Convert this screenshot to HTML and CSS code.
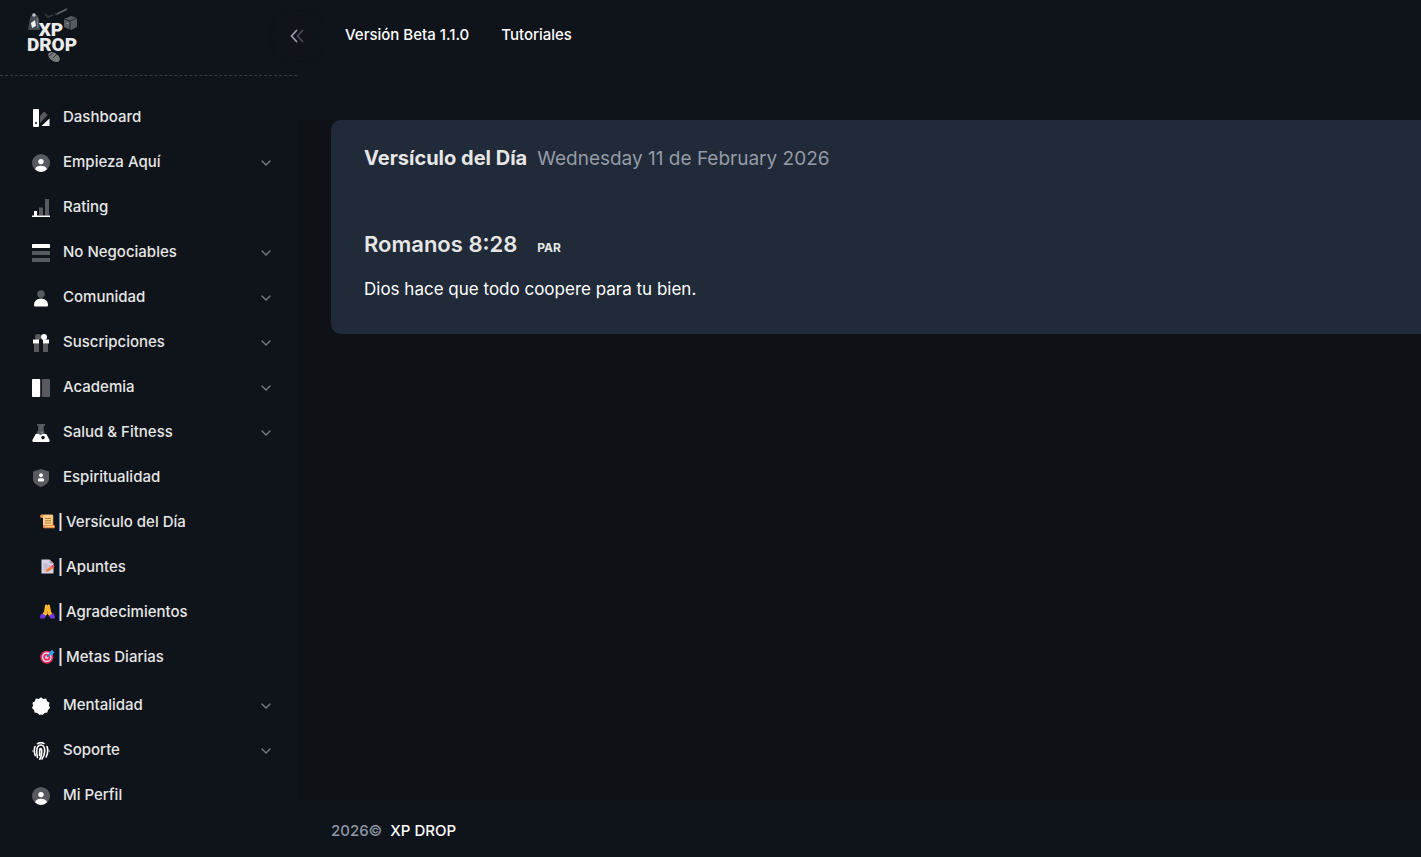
FILE: index.html
```html
<!DOCTYPE html>
<html lang="es">
<head>
<meta charset="utf-8">
<meta name="viewport" content="width=device-width, initial-scale=1">
<title>XP DROP</title>
<link rel="stylesheet" href="styles.css">
</head>
<body>
<svg class="defs" width="0" height="0" aria-hidden="true">
  <symbol id="chevron" viewBox="0 0 10 10"><path d="M1 3l4 4 4-4" fill="none" stroke="currentColor" stroke-width="1.3" stroke-linecap="round" stroke-linejoin="round"/></symbol>
  <symbol id="user" viewBox="0 0 18 18"><circle class="dim" cx="9" cy="9" r="9"/><circle cx="9" cy="7.6" r="2.7"/><path d="M3 15.2C4 12.7 6.2 11.8 9 11.8s5 .9 6 3.4A9 9 0 0 1 9 18a9 9 0 0 1-6-2.8z"/></symbol>
</svg>
<div class="app">
  <aside class="sidebar">
    <div class="brand">
      <a href="#" class="logo" aria-label="XP DROP">
        <svg width="52" height="56" viewBox="0 0 52 56">
          <path d="M18 6l3 3 5-2M28 5l2 2" fill="none" stroke="#343a40" stroke-width="1.6"/>
          <path d="M30 6l10-5" stroke="#626870" stroke-width="1.5"/>
          <path d="M3 10l2-3h5l2 3 1 12H1z" fill="#44494f"/><circle cx="7" cy="7" r="1.8" fill="#bfc3c6"/>
          <path d="M4 15l4-3 1 6-4 2z" fill="#f1f1f1"/><path d="M10 10l1 10" stroke="#83878b"/>
          <path d="M37 11l7-3 6 2v9l-6 3-7-3z" fill="#565b60"/><path d="M37 11l6 2 7-3M43 13v9" fill="none" stroke="#25292e"/><path d="M39 15l3 1" stroke="#92979b"/>
          <text class="logo-text" text-anchor="middle"><tspan x="24" y="28">XP</tspan><tspan x="25" y="43">DROP</tspan></text>
          <ellipse cx="27" cy="49" rx="6.5" ry="4" transform="rotate(35 27 49)" fill="#777b7e"/><path d="M22 48l4-3M26 50l4-4" stroke="#25292e" stroke-width=".8"/>
        </svg>
      </a>
      <button class="toggle" type="button" aria-label="Contraer menú">
        <svg width="14" height="14" viewBox="0 0 14 14" fill="none" stroke="currentColor" stroke-width="1.8" stroke-linecap="round" stroke-linejoin="round"><path d="M12.5 1.5L7.500 7l5 5.500" opacity=".4"/><path d="M6.500 1.500L1.500 7l5 5.500"/></svg>
      </button>
    </div>
    <nav class="menu" aria-label="Principal">
      <a class="item" href="#"><svg class="icon" viewBox="0 0 18 18"><path fill-rule="evenodd" d="M2 0h4a1 1 0 0 1 1 1v16a1 1 0 0 1-1 1H2a1 1 0 0 1-1-1V1a1 1 0 0 1 1-1zm2 13a1 1 0 1 0 0 2 1 1 0 0 0 0-2z"/><path class="dim" d="M8 7l4-4.500 3.700 3.500L8 14z"/><path d="M9.500 17L17.500 9.500V17z"/></svg><span>Dashboard</span></a>
      <a class="item" href="#"><svg class="icon"><use href="#user"/></svg><span>Empieza Aquí</span><svg class="arrow"><use href="#chevron"/></svg></a>
      <a class="item" href="#"><svg class="icon" viewBox="0 0 18 18"><path d="M0 16.500h18V18H0zM2 12h3v4.500H2z"/><path class="dim" d="M7 8.500h4v8H7zM13 0h4v16.500h-4z"/></svg><span>Rating</span></a>
      <a class="item" href="#"><svg class="icon" viewBox="0 0 18 18"><rect width="18" height="4" rx=".6"/><rect class="dim" width="18" height="4" y="7" rx=".6"/><rect class="dim" width="18" height="4" y="14" rx=".6"/></svg><span>No Negociables</span><svg class="arrow"><use href="#chevron"/></svg></a>
      <a class="item" href="#"><svg class="icon" viewBox="0 0 18 18"><circle class="dim" cx="9" cy="5" r="3.800"/><path d="M2 16c0-3.500 2.500-6.500 7-6.500s7 3 7 6.500c0 1-.5 1.500-1.500 1.500h-11C2.500 17.500 2 17 2 16z"/></svg><span>Comunidad</span><svg class="arrow"><use href="#chevron"/></svg></a>
      <a class="item" href="#"><svg class="icon" viewBox="0 0 18 18"><circle class="dim" cx="6" cy="3" r="3"/><circle cx="12" cy="3" r="3"/><path d="M1 5.500h6v4H1zM11 5.500h6v4h-6z"/><path class="dim" d="M2 9.500h5V18H2zM11 9.500h5V18h-5z"/></svg><span>Suscripciones</span><svg class="arrow"><use href="#chevron"/></svg></a>
      <a class="item" href="#"><svg class="icon" viewBox="0 0 18 18"><rect width="8.200" height="18" rx=".8"/><rect class="dim" x="10" width="8" height="18" rx=".8"/></svg><span>Academia</span><svg class="arrow"><use href="#chevron"/></svg></a>
      <a class="item" href="#"><svg class="icon" viewBox="0 0 18 18"><path class="dim" d="M5 0h8v1.800h-1.200v5L13 9.500 9 13l-5-3.500 2.200-3V1.800H5z"/><path fill-rule="evenodd" d="M3.700 10h3l1.800 1 2-1h3.800l3 5.500c.8 1.500 0 2.500-1 2.500H1.700c-1 0-1.800-1-1-2.500zm7.300 1.800a1.800 1.800 0 1 0 0 3.600 1.800 1.800 0 0 0 0-3.600z"/><circle class="dim" cx="10" cy="8.500" r="1"/></svg><span>Salud &amp; Fitness</span><svg class="arrow"><use href="#chevron"/></svg></a>
      <a class="item" href="#"><svg class="icon" viewBox="0 0 18 18"><path class="dim" d="M9 0l7.200 2.200c.5.100.8.500.8 1V10c0 4-4 6.500-8 8-4-1.500-8-4-8-8V3.200c0-.5.3-.9.800-1z"/><circle cx="9" cy="6.300" r="2"/><rect x="5.800" y="9.200" width="6.400" height="3.400" rx="1.700"/></svg><span>Espiritualidad</span></a>
      <div class="submenu">
        <a class="subitem" href="#"><svg class="emoji" viewBox="0 0 15 15"><path fill="#f2a65a" d="M1.500.5h10.300c1 0 1.500.7 1.500 1.500v11l-10 .8V4H1.500C0 4 0 .5 1.500.5z"/><path fill="#ffd08a" d="M3 1h9.300v10.500H3z"/><path fill="#e88d43" d="M1.500.8c-1.500 0-1.500 3 0 3H3v-2zM4 11h10c1.200 0 1.200 3.300 0 3.300H4.500c-1.500 0-1.700-3-.5-3.300z"/><path d="M5 4.500h6M5 6.700h6M5 8.900h6" stroke="#b87945"/><path d="M5 12.500h9" stroke="#ffd08a"/></svg><span class="bar">|</span><span>Versículo del Día</span></a>
        <a class="subitem" href="#"><svg class="emoji" viewBox="0 0 15 15"><path fill="#d9d4e5" d="M1.500.5h8l4 4v10h-12z"/><path fill="#a8a1b8" d="M9.500.5v4h4z"/><path d="M3.500 5h4M3.500 7h7M3.500 9h4M3.500 11h3" stroke="#aaa3ba"/><path d="M5.500 13l1-2.700 5-3.600 2 2.400-5 3.500z" fill="#f47b3d"/><path d="M11 7l1.400-1c1-.6 2.700 1.300 1.800 2.100L13 9z" fill="#e9476b"/></svg><span class="bar">|</span><span>Apuntes</span></a>
        <a class="subitem" href="#"><svg class="emoji" viewBox="0 0 15 15"><path fill="#ffb82e" d="M5 2c0-2 2.400-2 2.500 0 .2-2 2.500-2 2.500 0l1 5.500 1.700 3-3.200 1.700-2-2.500-2 2.500-3.200-1.700 1.700-3z"/><path d="M7.500 7v3" stroke="#e88a16"/><path fill="#6c38dd" d="M2 9l4 3-1.500 2.500H.3c-.6-2 .2-4 1.700-5.500zM13 9l-4 3 1.500 2.500h4.200c.6-2-.2-4-1.700-5.500z"/></svg><span class="bar">|</span><span>Agradecimientos</span></a>
        <a class="subitem" href="#"><svg class="emoji" viewBox="0 0 15 15"><circle cx="6.800" cy="8.200" r="6.500" fill="#e92f61"/><circle cx="6.800" cy="8.200" r="4.200" fill="none" stroke="#eadff0" stroke-width="1.300"/><circle cx="6.800" cy="8.200" r="1.600" fill="#f6ddec"/><path d="M7 8l4-4" stroke="#287ac9" stroke-width="1.400"/><path fill="#39a3ef" d="M9 4l3.200-3.500.6 1.800 2 .6-3.300 3.500H9z"/></svg><span class="bar">|</span><span>Metas Diarias</span></a>
      </div>
      <a class="item" href="#"><svg class="icon" viewBox="0 0 18 18"><path d="M9 .3l2.300 1.600 2.800-.3 1 2.600 2.400 1.500-.5 2.700 1 2.500-2 2-.6 2.700-2.800.4L10.500 18 9 17.500 7.500 18l-2.100-2-2.800-.4L2 12.900l-2-2 1-2.500-.5-2.700 2.400-1.500 1-2.600 2.800.3z"/></svg><span>Mentalidad</span><svg class="arrow"><use href="#chevron"/></svg></a>
      <a class="item" href="#"><svg class="icon" viewBox="0 0 18 18"><g fill="none" stroke="#fff" stroke-width="1.600" stroke-linecap="round"><path d="M5.500 1.700Q9-.2 12 1.600M3 4.500C2 7 2.200 10.500 3.200 13.500M15 4.500c1 3 .9 7-.8 10.500M5.500 15.500C4.700 12 4.300 7 5.700 4.700 7.500 2.200 11 2.500 12.200 5.500c1 3.500.3 8-2.200 11.500M7.800 17.200C9.500 14.500 10 10.500 9.500 7.500c-.3-1.300-1.700-1.200-1.800.2 0 2 .2 4-.2 5.800"/><path d="M0 9h1M17 9h1" opacity=".5"/></g></svg><span>Soporte</span><svg class="arrow"><use href="#chevron"/></svg></a>
      <a class="item" href="#"><svg class="icon"><use href="#user"/></svg><span>Mi Perfil</span></a>
    </nav>
  </aside>
  <div class="page">
    <header class="topbar">
      <a href="#">Versión Beta 1.1.0</a>
      <a href="#">Tutoriales</a>
    </header>
    <main class="content">
      <section class="card">
        <div class="card-head">
          <h1>Versículo del Día</h1>
          <span class="date">Wednesday 11 de February 2026</span>
        </div>
        <div class="verse">
          <h2>Romanos 8:28</h2>
          <span class="version">PAR</span>
        </div>
        <p>Dios hace que todo coopere para tu bien.</p>
      </section>
    </main>
    <footer class="footer">
      <span>2026©</span>
      <a href="#">XP DROP</a>
    </footer>
  </div>
</div>
</body>
</html>
```
FILE: styles.css
```css
* { box-sizing: border-box; }

body {
  margin: 0;
  background: #0f141b;
  color: #e6e6e6;
  font-family: Inter, "Liberation Sans", sans-serif;
  font-size: 15px;
  font-weight: 500;
}

a { color: inherit; text-decoration: none; }
h1, h2, p { margin: 0; }
svg { flex: none; }
.defs { position: absolute; }
.app { display: flex; min-height: 100vh; }

.sidebar { flex: none; width: 297px; }

.brand {
  position: relative;
  display: flex;
  height: 76px;
  padding: 8px 0 0 27px;
  border-bottom: 1px dashed #363b44;
}

.logo-text {
  fill: #ebebeb;
  font-family: Roboto, sans-serif;
  font-size: 19px;
  font-weight: 900;
}

.toggle {
  position: absolute;
  top: 19px;
  right: -17px;
  display: grid;
  place-items: center;
  width: 34px;
  height: 34px;
  padding: 0;
  border: 0;
  border-radius: 6px;
  background: #10131a;
  box-shadow: 0 0 8px #12171b;
  color: #9a9cae;
}

.menu { padding-top: 19px; }

.item {
  display: flex;
  align-items: center;
  height: 45px;
  padding: 0 26px 0 32px;
}

.item span { flex: 1; padding: 0 0 2px 13px; }
.icon { width: 18px; height: 18px; fill: #fff; }
.dim { fill: #fff; opacity: .3; }
.arrow { width: 10px; height: 10px; color: #7b7e8a; }

.submenu { padding-bottom: 3px; }

.subitem {
  display: flex;
  align-items: center;
  height: 45px;
  padding: 0 26px 2px 40px;
}

.emoji { width: 15px; height: 15px; }
.bar { width: 11px; font-weight: 600; text-align: center; }

.page {
  display: flex;
  flex: 1;
  flex-direction: column;
  min-width: 0;
}

.topbar {
  display: flex;
  gap: 32px;
  height: 120px;
  padding: 25px 0 0 48px;
  color: #fff;
  line-height: 20px;
}

.content {
  flex: 1;
  padding-left: 34px;
  background: #0e1115;
}

.card {
  padding: 24px 33px;
  padding-bottom: 33px;
  border-radius: 10px 0 0 10px;
  background: #212a38;
}

.card-head {
  display: flex;
  align-items: baseline;
  gap: 10px;
  line-height: 28px;
}

h1 { font-size: 20px; font-weight: 700; }
.date { color: #949ba7; font-size: 19px; font-weight: 400; }

.verse {
  display: flex;
  align-items: baseline;
  gap: 20px;
  margin: 55px 0 13px;
  line-height: 32px;
}

h2 { font-size: 22px; font-weight: 600; }
.version { font-size: 12px; font-weight: 700; }
.card p { color: #fff; font-size: 17px; font-weight: 400; line-height: 24px; }

.footer {
  display: flex;
  gap: 8px;
  height: 57px;
  padding: 21px 34px;
  color: #8e98a6;
  line-height: 20px;
}

.footer a { color: #fff; }
```
